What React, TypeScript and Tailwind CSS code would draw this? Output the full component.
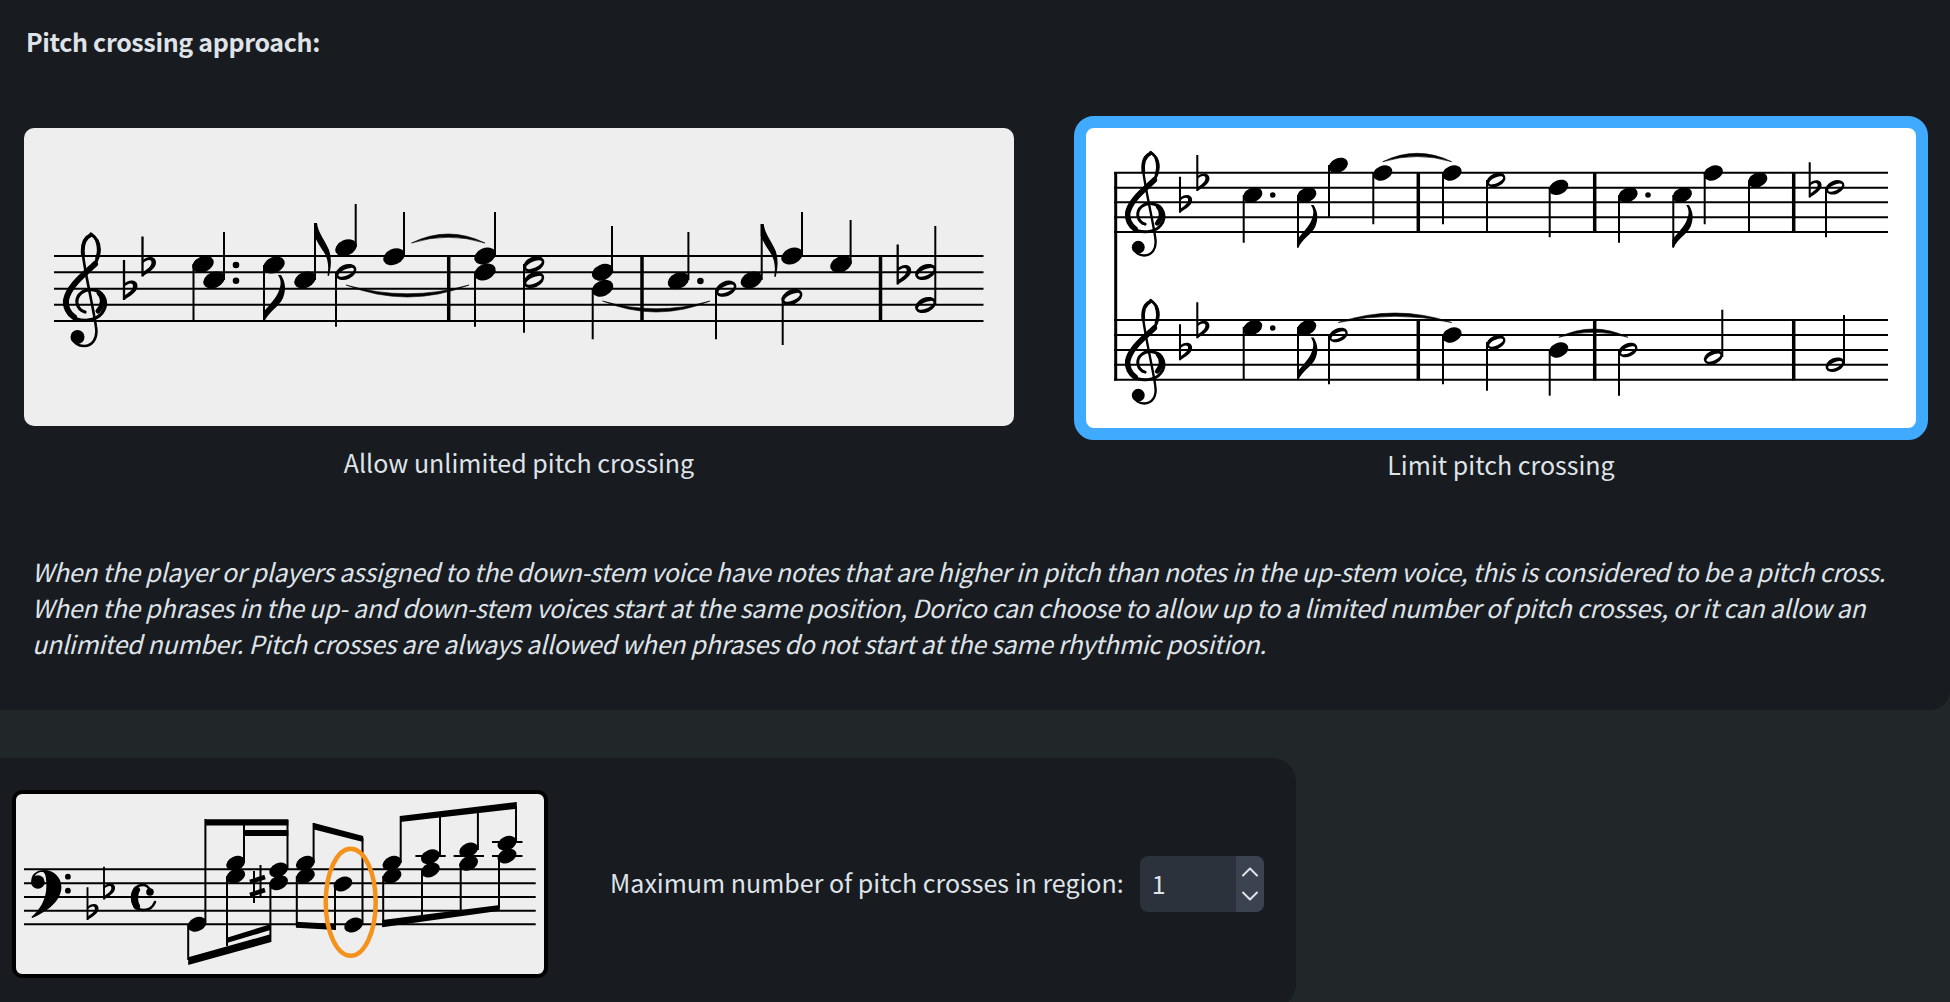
import React from "react";
import { ChevronUp, ChevronDown } from "lucide-react";

const Staff = ({ y, x1, x2 }: { y: number[]; x1: number; x2: number }) => (
  <g stroke="#000" strokeWidth={2}>
    {y.map((v) => (
      <line key={v} x1={x1} x2={x2} y1={v} y2={v} />
    ))}
  </g>
);

const Head = ({ x, y, s = 1 }: { x: number; y: number; s?: number }) => (
  <ellipse cx={x} cy={y} rx={11.2 * s} ry={7.8 * s} transform={`rotate(-24 ${x} ${y})`} fill="#000" />
);

const Hollow = ({ x, y, s = 1 }: { x: number; y: number; s?: number }) => (
  <path
    transform={`translate(${x} ${y}) rotate(-24) scale(${s})`}
    fillRule="evenodd"
    d="M-11 0a11 7.400 0 1 0 22 0a11 7.400 0 1 0 -22 0ZM-8.400 .4a8.400 3.200 0 1 0 16.800 0a8.400 3.200 0 1 0 -16.800 0Z"
  />
);

const Stem = ({ x, y1, y2, w = 2 }: { x: number; y1: number; y2: number; w?: number }) => (
  <line x1={x} x2={x} y1={y1} y2={y2} stroke="#000" strokeWidth={w} />
);

const Bar = ({ x, y1, y2 }: { x: number; y1: number; y2: number }) => (
  <line x1={x} x2={x} y1={y1} y2={y2} stroke="#000" strokeWidth={3.500} />
);

const Dot = ({ x, y, r = 3.300 }: { x: number; y: number; r?: number }) => <circle cx={x} cy={y} r={r} fill="#000" />;

const Slur = ({ x1, x2, y, peak, flip }: { x1: number; x2: number; y: number; peak: number; flip?: boolean }) => {
  const c = 2 * peak - y;
  const t = flip ? -6.500 : 6.500;
  return <path fill="#000" d={`M${x1} ${y}Q${(x1 + x2) / 2} ${c} ${x2} ${y}Q${(x1 + x2) / 2} ${c + t} ${x1} ${y}Z`} stroke="#000" strokeWidth={0.6} />;
};

const DownFlag = ({ x, y, s = 1 }: { x: number; y: number; s?: number }) => (
  <path
    transform={`translate(${x} ${y}) scale(${s})`}
    d="M-1 0V-8C3-14 10-20 14-28C17-35 18-40 14-46L17-46C22-38 22-31 19-23C15-14 5-10 0 1Z"
  />
);

const UpFlag = ({ x, y }: { x: number; y: number }) => (
  <path transform={`translate(${x} ${y})`} d="M-1 0H2C3 10 10 17 14 27C17 36 16 45 14 53L12.500 52.500C14 44 13 37 10 31C7 26 3 21-1 12Z" />
);

const Flat = ({ x, y, s = 1 }: { x: number; y: number; s?: number }) => (
  <g transform={`translate(${x} ${y}) scale(${s})`}>
    <path d="M0 0V40" stroke="#000" strokeWidth={2.300} />
    <path d="M0 24C4 19 13.500 19 13.500 26C13.500 32 6 36 0 40V36C4 33 9 30 9 26C9 22 4 23 0 27Z" />
  </g>
);

const Treble = ({ x, y, s = 1 }: { x: number; y: number; s?: number }) => (
  <g transform={`translate(${x} ${y}) scale(${s})`} fill="none" stroke="#000" strokeLinecap="round">
    <path strokeWidth={3.200} d="M29 1C36 6 39 14 36 24C33 36 16 44 8 56C2 64 2 76 10 83C18 90 34 88 40 80C47 71 43 59 32 57C22 55 14 62 15 70C16 75 19 78 23 79" />
    <path strokeWidth={6} d="M33 31C24 40 7 52 4 67C3 74 7 81 12 84" />
    <path strokeWidth={5} d="M36 78C41 73 42 65 37 60" />
    <path strokeWidth={4} d="M29 2C22 5 20 12 21 22" />
    <path strokeWidth={3.400} d="M35 8C37 14 37 20 35 25" />
    <path strokeWidth={2.600} d="M21 22C23 40 32 78 34 94C36 106 30 113 22 113C16 113 12 110 12 106" />
    <circle cx={15.500} cy={104} r={7} fill="#000" stroke="none" />
  </g>
);

const Bass = ({ x, y }: { x: number; y: number }) => (
  <g transform={`translate(${x} ${y})`}>
    <path d="M0 10C0 3 7 0 13 0C23 0 30 8 30 17C30 31 15 42 1 48L0 47C8 40 15 30 15 16C15 8 14 2 11 2C7 2 4 4 3 7C6 5 11 7 11 12C11 16 8 18 5.500 18C2 18 0 14 0 10Z" />
    <circle cx={6.500} cy={12} r={6.800} />
  </g>
);

const Beam = ({ x1, t1, b1, x2, t2, b2 }: { x1: number; t1: number; b1: number; x2: number; t2: number; b2: number }) => (
  <polygon points={`${x1},${t1} ${x2},${t2} ${x2},${b2} ${x1},${b1}`} fill="#000" />
);

const UnlimitedScore = () => (
  <svg viewBox="24 128 990 298" className="block w-full h-full">
    <Staff y={[256, 272.300, 288.700, 304.700, 321]} x1={54} x2={983.500} />
    <Treble x={62} y={233} />
    <Flat x={124} y={260} />
    <Flat x={142.500} y={236.500} />

    <Head x={203} y={264.300} />
    <Head x={214} y={280} />
    <Stem x={193.500} y1={264} y2={321} />
    <Stem x={224} y1={232} y2={280} />
    <Dot x={236} y={265} />
    <Dot x={236} y={280.700} />

    <Head x={274} y={265} />
    <Stem x={264} y1={265} y2={321} />
    <DownFlag x={264} y={321} />
    <Head x={305} y={280} />
    <Stem x={315} y1={223} y2={280} />
    <UpFlag x={315} y={223} />

    <Head x={346} y={247.700} />
    <Stem x={355.700} y1={204} y2={247} />
    <Hollow x={346} y={272} />
    <Stem x={336} y1={272} y2={326.700} />
    <Slur x1={346} x2={469} y={285} peak={297} flip />

    <Head x={394} y={256.700} />
    <Stem x={404} y1={212} y2={256} />
    <Slur x1={411.500} x2={485} y={243} peak={234} />

    <Bar x={448.700} y1={256} y2={321} />

    <Head x={485} y={256} />
    <Head x={485} y={272} />
    <Stem x={495} y1={212} y2={256} />
    <Stem x={475} y1={272} y2={326.700} />

    <Hollow x={533.800} y={264.300} />
    <Hollow x={533.800} y={280} />
    <Stem x={524} y1={264} y2={332.700} />

    <Head x={602.600} y={272.300} />
    <Head x={602.600} y={288.300} />
    <Stem x={612} y1={226} y2={272} />
    <Stem x={592.700} y1={288} y2={339.300} />
    <Slur x1={602.600} x2={710} y={301} peak={312} flip />

    <Bar x={642} y1={256} y2={321} />

    <Head x={678.400} y={280.700} />
    <Stem x={688.400} y1={232} y2={280} />
    <Dot x={700.400} y={281} />

    <Hollow x={726} y={288.700} />
    <Stem x={716} y1={288} y2={339.300} />

    <Head x={751.400} y={280} />
    <Stem x={761.700} y1={224} y2={280} />
    <UpFlag x={761.700} y={224} />

    <Head x={792} y={256} />
    <Stem x={802} y1={212} y2={256} />
    <Hollow x={792} y={297} />
    <Stem x={782.700} y1={297} y2={345} />

    <Head x={841} y={264.300} />
    <Stem x={850.600} y1={220} y2={264} />

    <Bar x={880.500} y1={256} y2={321} />

    <Flat x={897.700} y={244.500} />
    <Hollow x={925.600} y={272} />
    <Hollow x={925.600} y={305} />
    <Stem x={935.300} y1={226} y2={305} />
  </svg>
);

const LimitScore = () => {
  const s = 0.9;
  return (
    <svg viewBox="1086 128 830 300" className="block w-full h-full">
      <Staff y={[172.700, 187.700, 202.300, 217.300, 232]} x1={1114} x2={1888} />
      <Staff y={[320, 335, 350, 364.700, 379.700]} x1={1114} x2={1888} />
      <line x1={1115.700} x2={1115.700} y1={172} y2={380.500} stroke="#000" strokeWidth={3} />

      <Treble x={1124} y={151.500} s={0.92} />
      <Flat x={1180} y={176.700} s={0.9} />
      <Flat x={1197.300} y={155} s={0.9} />
      <Treble x={1124} y={299.500} s={0.92} />
      <Flat x={1180} y={324.300} s={0.9} />
      <Flat x={1197.300} y={302.300} s={0.9} />

      {/* top staff */}
      <Head x={1252.700} y={195} s={s} />
      <Stem x={1243.700} y1={195} y2={242.700} />
      <Dot x={1272.700} y={195} r={2.800} />
      <Head x={1306.700} y={195} s={s} />
      <Stem x={1298} y1={195} y2={247.300} />
      <DownFlag x={1298} y={247.300} s={0.92} />
      <Head x={1338.300} y={165.300} s={s} />
      <Stem x={1329} y1={165} y2={216.700} />
      <Head x={1382.700} y={173} s={s} />
      <Stem x={1373.300} y1={173} y2={224.300} />
      <Slur x1={1382.700} x2={1451.700} y={161.700} peak={153.300} />
      <Bar x={1418.300} y1={172} y2={232.500} />
      <Head x={1452} y={173} s={s} />
      <Stem x={1443} y1={173} y2={224.300} />
      <Hollow x={1496} y={180} s={s} />
      <Stem x={1487} y1={180} y2={232} />
      <Head x={1558.700} y={187.300} s={s} />
      <Stem x={1549.700} y1={187} y2={237.300} />
      <Bar x={1594.700} y1={172} y2={232.500} />
      <Head x={1628} y={195} s={s} />
      <Stem x={1619} y1={195} y2={242.700} />
      <Dot x={1648} y={195} r={2.800} />
      <Head x={1682.300} y={195} s={s} />
      <Stem x={1673.300} y1={195} y2={247.300} />
      <DownFlag x={1673.300} y={247.300} s={0.92} />
      <Head x={1713.300} y={173} s={s} />
      <Stem x={1704.700} y1={173} y2={224.300} />
      <Head x={1757.700} y={180} s={s} />
      <Stem x={1749} y1={180} y2={232} />
      <Bar x={1793.700} y1={172} y2={232.500} />
      <Flat x={1809.700} y={162.300} s={0.88} />
      <Hollow x={1835} y={187.300} s={s} />
      <Stem x={1826} y1={187} y2={237.300} />

      {/* bottom staff */}
      <Head x={1252.700} y={327.700} s={s} />
      <Stem x={1243.700} y1={327} y2={379.700} />
      <Dot x={1272.700} y={328} r={2.800} />
      <Head x={1306.700} y={327.700} s={s} />
      <Stem x={1298} y1={327} y2={379.700} />
      <DownFlag x={1298} y={379.700} s={0.92} />
      <Hollow x={1338.300} y={335} s={s} />
      <Stem x={1329} y1={335} y2={384.300} />
      <Slur x1={1338.300} x2={1451.700} y={322.500} peak={313} />
      <Bar x={1418.300} y1={320} y2={380.500} />
      <Head x={1452} y={335} s={s} />
      <Stem x={1443} y1={335} y2={384.300} />
      <Hollow x={1496} y={342.300} s={s} />
      <Stem x={1487} y1={342} y2={390.700} />
      <Head x={1558.700} y={350} s={s} />
      <Stem x={1549.700} y1={350} y2={395.700} />
      <Slur x1={1558.700} x2={1628} y={337.300} peak={329} />
      <Bar x={1594.700} y1={320} y2={380.500} />
      <Hollow x={1628} y={350} s={s} />
      <Stem x={1619} y1={350} y2={395.700} />
      <Hollow x={1713.300} y={357.300} s={s} />
      <Stem x={1722.300} y1={309.700} y2={357} />
      <Bar x={1793.700} y1={320} y2={380.500} />
      <Hollow x={1835} y={364.700} s={s} />
      <Stem x={1844} y1={315} y2={364} />
    </svg>
  );
};

const Ledger = ({ x1, x2, y }: { x1: number; x2: number; y: number }) => (
  <line x1={x1} x2={x2} y1={y} y2={y} stroke="#000" strokeWidth={1.800} />
);

const CrossingScore = () => {
  const s = 0.88;
  return (
    <svg viewBox="16 794 528 180" className="block w-full h-full">
      <Staff y={[869.300, 883.300, 897, 910.700, 924.300]} x1={24} x2={535.700} />
      <Bass x={31.400} y={870} />
      <Dot x={67.900} y={876.700} r={2.900} />
      <Dot x={67.900} y={890.700} r={2.900} />
      <Flat x={87.500} y={887.300} s={0.82} />
      <Flat x={104} y={866.700} s={0.82} />
      <g fill="none" stroke="#000" strokeLinecap="round" transform="translate(130 884)">
        <path strokeWidth={2.500} d="M20 6C18 2 15 1 13 1C6 1 2 7 2 13.500C2 21 7 26 14 26C19 26 23 23 25 18" />
        <path strokeWidth={7} d="M6.500 6C4 10 4 18 6.500 22" />
        <circle cx={20} cy={8} r={3.800} fill="#000" stroke="none" />
      </g>

      <Head x={197} y={924.300} s={s} />
      <Stem x={205.400} y1={819} y2={922} />
      <Stem x={188.200} y1={924} y2={960} />
      <Head x={235.700} y={863.300} s={s} />
      <Head x={235.700} y={876} s={s} />
      <Stem x={244} y1={820} y2={863} />
      <Stem x={227} y1={876} y2={946} />
      <g strokeWidth={2} stroke="#000">
        <line x1={250} x2={265} y1={882} y2={877} strokeWidth={4.500} />
        <line x1={250} x2={265} y1={895} y2={890} strokeWidth={4.500} />
        <line x1={254} x2={254} y1={871} y2={903} />
        <line x1={260.500} x2={260.500} y1={865} y2={897} />
      </g>
      <Head x={278.600} y={870} s={s} />
      <Head x={278.600} y={882.700} s={s} />
      <Stem x={287.500} y1={820} y2={870} />
      <Stem x={270.400} y1={882} y2={942} />
      <Beam x1={205} t1={819.300} b1={825.500} x2={288.300} t2={819.300} b2={825.500} />
      <Beam x1={244} t1={830} b1={836} x2={288.300} t2={830} b2={836} />
      <Beam x1={188.200} t1={957.300} b1={965} x2={270.400} t2={934.300} b2={942.300} />
      <Beam x1={226.800} t1={937.700} b1={943} x2={270.400} t2={924.300} b2={930} />

      <Head x={305.400} y={863.300} s={s} />
      <Head x={305.400} y={876} s={s} />
      <Stem x={313.600} y1={823} y2={863} />
      <Stem x={296.800} y1={876} y2={927} />
      <Beam x1={313} t1={822.700} b1={829.300} x2={363.200} t2={836} b2={842} />
      <Beam x1={296} t1={921.700} b1={927.700} x2={336} t2={924} b2={930} />
      <Head x={342.900} y={884} s={s} />
      <Stem x={335} y1={884} y2={930} />
      <Head x={353.600} y={925} s={s} />
      <Stem x={362.500} y1={838} y2={925} />
      <ellipse cx={350.700} cy={902.300} rx={25} ry={53.500} fill="none" stroke="#f5921b" strokeWidth={4.500} />

      <Head x={392} y={863.300} s={s} />
      <Head x={392} y={876} s={s} />
      <Stem x={400.700} y1={816} y2={863} />
      <Stem x={383.200} y1={876} y2={927} />
      <Ledger x1={415.400} x2={445.700} y={856} />
      <Head x={430.400} y={856.700} s={s} />
      <Head x={430.400} y={870} s={s} />
      <Stem x={440} y1={815} y2={856} />
      <Stem x={422} y1={870} y2={920} />
      <Ledger x1={453.600} x2={484} y={856} />
      <Head x={468.600} y={850} s={s} />
      <Head x={468.600} y={863.300} s={s} />
      <Stem x={477.900} y1={812} y2={850} />
      <Stem x={460.700} y1={863} y2={912} />
      <Ledger x1={492} x2={522.500} y={842} />
      <Ledger x1={492} x2={522.500} y={856} />
      <Head x={507} y={843.300} s={s} />
      <Head x={507} y={856} s={s} />
      <Stem x={516} y1={806} y2={843} />
      <Stem x={499} y1={856} y2={908} />
      <Beam x1={400} t1={816} b1={822} x2={516.800} t2={802} b2={808.700} />
      <Beam x1={382.400} t1={920} b1={927.300} x2={499.800} t2={905} b2={910.700} />
    </svg>
  );
};

export default function App() {
  return (
    <div className="h-[1002px] w-full overflow-hidden bg-[#212629] font-['Noto_Sans_CJK_SC','Noto_Sans',sans-serif] text-[#dfe3e8]">
      <div className="h-[710px] rounded-br-[20px] bg-[#181b20]">
        <h2 className="pl-[26px] pt-[23px] text-[25px] font-semibold leading-[36px] tracking-[-0.35px]">Pitch crossing approach:</h2>

        <div className="mt-[57px] flex items-start">
          <figure className="ml-[24px] mt-[12px] w-[990px]">
            <div className="h-[298px] overflow-hidden rounded-[10px] bg-[#eeeeee]">
              <UnlimitedScore />
            </div>
            <figcaption className="mt-[18px] text-center text-[25px] leading-[36px]">Allow unlimited pitch crossing</figcaption>
          </figure>
          <figure className="ml-[60px] w-[854px]">
            <div className="box-border h-[324px] overflow-hidden rounded-[20px] border-[12px] border-[#40aaff] bg-white">
              <div className="h-full overflow-hidden rounded-[8px]">
                <LimitScore />
              </div>
            </div>
            <figcaption className="mt-[6px] text-center text-[25px] leading-[36px]">Limit pitch crossing</figcaption>
          </figure>
        </div>

        <p className="mt-[71px] pl-[32px] text-[25px] italic leading-[36px] tracking-[-0.31px] whitespace-nowrap">
          When the player or players assigned to the down-stem voice have notes that are higher in pitch than notes in the up-stem voice, this is considered to be a pitch cross.
          <br />
          When the phrases in the up- and down-stem voices start at the same position, Dorico can choose to allow up to a limited number of pitch crosses, or it can allow an
          <br />
          unlimited number. Pitch crosses are always allowed when phrases do not start at the same rhythmic position.
        </p>
      </div>

      <div className="mt-[48px] flex h-[250px] w-[1296px] items-start rounded-r-[24px] bg-[#181b20]">
        <div className="ml-[12px] mt-[32px] box-border h-[188px] w-[536px] overflow-hidden rounded-[10px] border-4 border-black bg-[#eeeeee]">
          <CrossingScore />
        </div>
        <div className="ml-[62px] mt-[98px] flex items-start">
          <label className="text-[25px] leading-[52px]">Maximum number of pitch crosses in region:</label>
          <div className="ml-[16px] flex h-[56px] w-[124px] overflow-hidden rounded-[8px] bg-[#2b323c]">
            <span className="flex-1 pl-[12px] text-[25px] leading-[54px]">1</span>
            <div className="flex w-[28px] flex-col items-center justify-center bg-[#3a434f]">
              <div className="flex h-[24px] items-center justify-center">
                <ChevronUp className="h-7 w-7 shrink-0" strokeWidth={1.7} />
              </div>
              <div className="flex h-[24px] items-center justify-center">
                <ChevronDown className="h-7 w-7 shrink-0" strokeWidth={1.7} />
              </div>
            </div>
          </div>
        </div>
      </div>
    </div>
  );
}
